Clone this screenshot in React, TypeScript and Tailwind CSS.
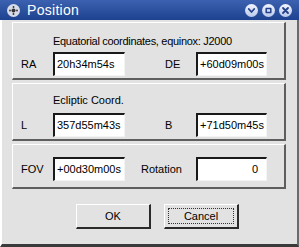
import React from 'react';

const font = { fontFamily: '"Liberation Sans", Arial, sans-serif' };

function Field({ value, className = '', right = false }: { value: string; className?: string; right?: boolean }) {
  return (
    <div
      className={`h-[24px] bg-white border-t-2 border-l-2 border-b border-r border-t-[#1a1a1a] border-l-[#1a1a1a] border-b-[#f4f4f4] border-r-[#f4f4f4] flex items-center text-[11px] text-black leading-none ${right ? 'justify-end pr-[8px]' : 'pl-[2px]'} ${className}`}
    >
      {value}
    </div>
  );
}

function Panel({ children, className = '' }: { children: React.ReactNode; className?: string }) {
  return (
    <div className={`border-t border-l border-b-2 border-r-2 border-t-white border-l-white border-b-[#5e5e5e] border-r-[#5e5e5e] ${className}`}>
      {children}
    </div>
  );
}

function Row({ a, av, b, bv, bw = 'w-[31px]', bpad = 'ml-[40px]', right = false }: { a: string; av: string; b: string; bv: string; bw?: string; bpad?: string; right?: boolean }) {
  return (
    <div className="flex items-center h-[24px] text-[11px] text-black">
      <span className="w-[32px]">{a}</span>
      <Field value={av} className="w-[72px]" />
      <span className={`${bpad} ${bw}`}>{b}</span>
      <Field value={bv} className="w-[71px]" right={right} />
    </div>
  );
}

function CircleBtn({ children }: { children: React.ReactNode }) {
  return (
    <div className="w-[13px] h-[13px] rounded-full bg-gradient-to-b from-[#f2f5ff] to-[#b9c8ea] flex items-center justify-center">
      <svg width="9" height="9" viewBox="0 0 9 9" fill="none" stroke="#22418a" strokeWidth="1.8" strokeLinecap="round" strokeLinejoin="round">
        {children}
      </svg>
    </div>
  );
}

export default function App() {
  return (
    <div style={font} className="w-[299px] h-[247px] bg-[#e2e2e2] overflow-hidden flex flex-col">
      {/* Title bar */}
      <div className="h-[20px] shrink-0 bg-gradient-to-b from-[#3c61b0] to-[#1d4390] flex items-center pl-[7px] pr-[7px]">
        <div className="w-[13px] h-[13px] rounded-full bg-[#d7dcea] flex items-center justify-center">
          <svg width="9" height="9" viewBox="0 0 9 9" fill="#333">
            <circle cx="4.5" cy="4.5" r="2" />
            <circle cx="4.5" cy="1" r="0.9" />
            <circle cx="4.5" cy="8" r="0.9" />
            <circle cx="1" cy="4.5" r="0.9" />
            <circle cx="8" cy="4.5" r="0.9" />
          </svg>
        </div>
        <span className="ml-[7px] text-white text-[14px] leading-none tracking-[0.3px]">Position</span>
        <div className="ml-auto flex gap-[4px]">
          <CircleBtn>
            <path d="M1.8 3 L4.5 6 L7.2 3" />
          </CircleBtn>
          <CircleBtn>
            <rect x="2.2" y="2.5" width="4.6" height="4" strokeWidth="1.5" />
          </CircleBtn>
          <CircleBtn>
            <path d="M2 2 L7 7 M7 2 L2 7" />
          </CircleBtn>
        </div>
      </div>

      {/* Body */}
      <div className="flex-1 border-l-2 border-l-white border-r-2 border-r-[#6a6a6a] border-b-[3px] border-b-[#3a3a3a] flex flex-col pl-[10px] pr-[11px] pt-[2px]">
        <Panel className="h-[58px] pl-[8px] pt-[11px]">
          <div className="ml-[32px] text-[11px] leading-[14px] text-black tracking-[-0.3px]">Equatorial coordinates, equinox: J2000</div>
          <div className="mt-[4px]">
            <Row a="RA" av="20h34m54s" b="DE" bv="+60d09m00s" />
          </div>
        </Panel>
        <Panel className="h-[58px] mt-[3px] pl-[8px] pt-[9px]">
          <div className="ml-[32px] text-[11px] leading-[14px] text-black">Ecliptic Coord.</div>
          <div className="mt-[6px]">
            <Row a="L" av="357d55m43s" b="B" bv="+71d50m45s" />
          </div>
        </Panel>
        <Panel className="h-[45px] mt-[3px] pl-[8px] pt-[12px]">
          <Row a="FOV" av="+00d30m00s" b="Rotation" bv="0" bpad="ml-[16px]" bw="w-[55px]" right />
        </Panel>
        <div className="flex mt-[15px] pl-[64px] gap-[13px]">
          <div className="w-[75px] h-[25px] border-t border-l border-b-2 border-r-2 border-t-white border-l-white border-b-[#2a2a2a] border-r-[#2a2a2a] flex items-center justify-center text-[11px] text-black">
            OK
          </div>
          <div className="w-[75px] h-[25px] border-t border-l border-b-2 border-r-2 border-t-white border-l-white border-b-[#2a2a2a] border-r-[#2a2a2a] p-[3px]">
            <div className="w-full h-full border border-dotted border-[#333] flex items-center justify-center text-[11px] text-black">
              Cancel
            </div>
          </div>
        </div>
      </div>
    </div>
  );
}
